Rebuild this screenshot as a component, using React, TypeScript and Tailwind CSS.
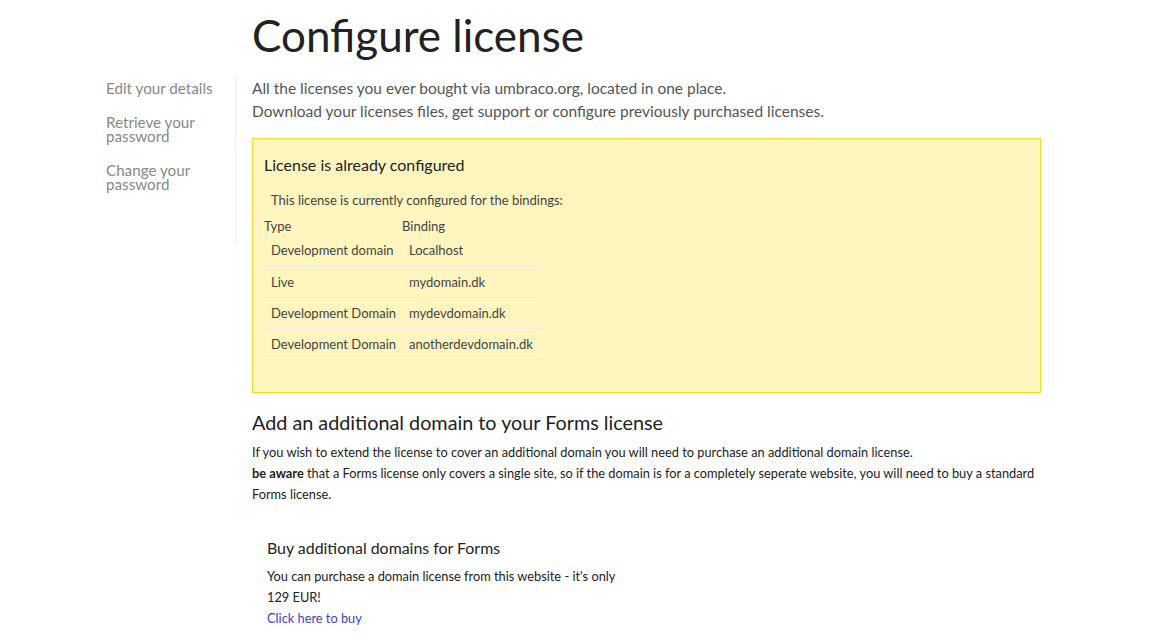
import React from 'react';

const bindings = [
  { type: 'Development domain', binding: 'Localhost' },
  { type: 'Live', binding: 'mydomain.dk' },
  { type: 'Development Domain', binding: 'mydevdomain.dk' },
  { type: 'Development Domain', binding: 'anotherdevdomain.dk' },
];

const App: React.FC = () => {
  return (
    <div className="min-h-screen bg-white text-[#222] font-['Lato',sans-serif]">
      <div className="pl-[252px] pt-[6px]">
        <h1 className="text-[44px] leading-[58px] font-normal text-[#222]">Configure license</h1>
      </div>
      <div className="flex items-start pl-[106px] mt-[12px]">
        <nav className="w-[130px] shrink-0 border-r border-[#f0f0f0] h-[168px] pt-[5px]">
          <ul className="space-y-[20px] text-[15.2px] text-[#888]">
            <li className="leading-[14px]">Edit your details</li>
            <li className="leading-[14px]">Retrieve your<br />password</li>
            <li className="leading-[14px]">Change your<br />password</li>
          </ul>
        </nav>
        <main className="ml-[16px] w-[789px]">
          <p className="pt-[1px] text-[15.5px] leading-[23px] text-[#555]">
            All the licenses you ever bought via umbraco.org, located in one place.
            <br />
            Download your licenses files, get support or configure previously purchased licenses.
          </p>

          <div className="mt-[15px] h-[255px] bg-[#fff5be] border border-[#f9d52f] px-[11px] pt-[16px]">
            <h3 className="text-[16px] leading-[20px] text-[#222]">License is already configured</h3>
            <p className="mt-[16px] pl-[7px] text-[13px] leading-[18px] text-[#444]">
              This license is currently configured for the bindings:
            </p>
            <table className="mt-[8px] w-[277px] text-[13px] text-[#444] border-collapse">
              <thead>
                <tr>
                  <th className="text-left font-normal w-[138px] leading-[18px] pb-[7px]">Type</th>
                  <th className="text-left font-normal leading-[18px] pb-[7px]">Binding</th>
                </tr>
              </thead>
              <tbody>
                {bindings.map((b, i) => (
                  <tr key={i} className="border-b border-[#eeede8]">
                    <td className={`pl-[7px] ${i === 0 ? 'pt-0 pb-[7px]' : 'pt-[7px] pb-[6px]'} leading-[17px] whitespace-nowrap`}>{b.type}</td>
                    <td className={`pl-[7px] ${i === 0 ? 'pt-0 pb-[7px]' : 'pt-[7px] pb-[6px]'} leading-[17px] whitespace-nowrap`}>{b.binding}</td>
                  </tr>
                ))}
              </tbody>
            </table>
          </div>

          <h2 className="mt-[17px] text-[19.8px] leading-[24px] text-[#222]">Add an additional domain to your Forms license</h2>
          <p className="mt-[8px] text-[12.8px] leading-[21px] text-[#222]">
            If you wish to extend the license to cover an additional domain you will need to purchase an additional domain license.
            <br />
            <b className="font-bold">be aware</b> that a Forms license only covers a single site, so if the domain is for a completely seperate website, you will need to buy a standard Forms license.
          </p>

          <div className="mt-[33px] pl-[15px]">
            <h4 className="text-[15.9px] leading-[20px] text-[#222]">Buy additional domains for Forms</h4>
            <p className="mt-[8px] w-[360px] text-[12.8px] leading-[21px] text-[#222]">
              You can purchase a domain license from this website - it's only 129 EUR!
            </p>
            <a href="#" className="block text-[12.8px] leading-[21px] text-[#3f3fc8]">Click here to buy</a>
          </div>
        </main>
      </div>
    </div>
  );
};

export default App;
